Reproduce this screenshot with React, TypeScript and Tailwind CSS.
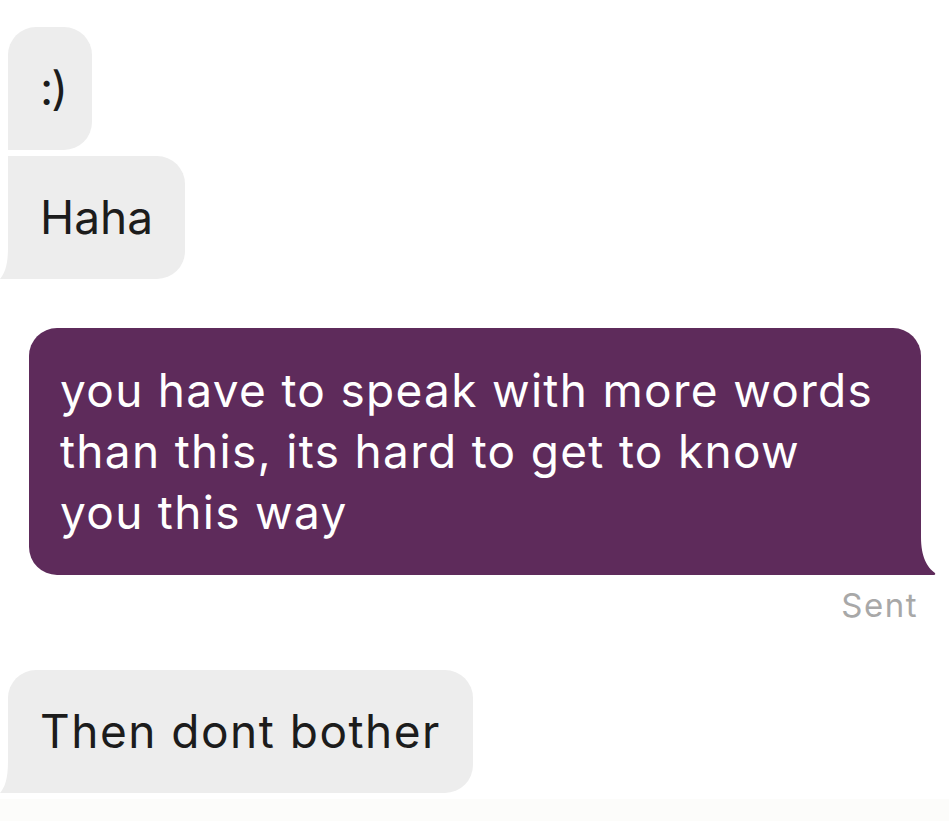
import React from 'react';

type Side = 'left' | 'right';

function Tail({ side, color }: { side: Side; color: string }) {
  if (side === 'left') {
    return (
      <svg
        className="absolute bottom-0 left-[-8px] h-[32px] w-[12px]"
        viewBox="0 0 12 32"
        preserveAspectRatio="none"
      >
        <path d="M8 0 C8 18 5 26 0 32 L12 32 L12 0 Z" fill={color} />
      </svg>
    );
  }
  return (
    <svg
      className="absolute bottom-0 right-[-18px] h-[38px] w-[22px]"
      viewBox="0 0 22 38"
      preserveAspectRatio="none"
    >
      <path d="M4 0 C4 20 10 30 18 36 Q19 38 16 38 L0 38 L0 0 Z" fill={color} />
    </svg>
  );
}

function Received({
  text,
  className,
  tail,
}: {
  text: string;
  className: string;
  tail?: boolean;
}) {
  return (
    <div
      className={`relative ml-[8px] bg-[#ededed] py-[31px] text-[46px] leading-[61px] text-[#1c1c1c] ${className}`}
    >
      {text}
      {tail && <Tail side="left" color="#ededed" />}
    </div>
  );
}

export default function App() {
  return (
    <div
      className="flex h-[821px] w-[949px] flex-col overflow-hidden bg-white"
      style={{ fontFamily: 'Inter, "Noto Sans", sans-serif' }}
    >
      <div className="flex flex-1 flex-col items-start pt-[27px]">
        <Received
          text=":)"
          className="w-[84px] pl-[32px] tracking-[-2px] rounded-t-[28px] rounded-br-[28px]"
        />
        <Received
          text="Haha"
          tail
          className="mt-[6px] px-[32px] rounded-r-[28px]"
        />

        <div className="relative ml-[29px] mt-[49px] w-[892px] rounded-t-[28px] rounded-bl-[28px] bg-[#5e2b5b] px-[31px] py-[32px] text-[46px] leading-[61px] tracking-[1.3px] text-white">
          you have to speak with more words than this, its hard to get to know you this way
          <Tail side="right" color="#5e2b5b" />
        </div>
        <div className="mr-[31px] mt-[10px] self-end text-[33px] leading-[40px] tracking-[1.5px] text-[#a8a8a8]">
          Sent
        </div>

        <Received
          text="Then dont bother"
          tail
          className="mt-[45px] px-[32px] tracking-[1.5px] rounded-t-[28px] rounded-br-[28px]"
        />
      </div>
      <div className="h-[22px] bg-[#fcfcfa]" />
    </div>
  );
}
